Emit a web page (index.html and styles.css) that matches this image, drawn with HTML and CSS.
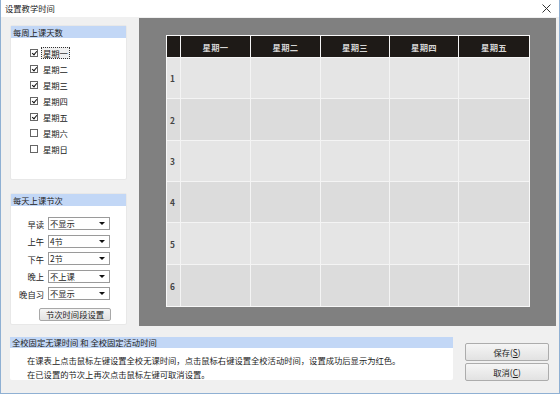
FILE: index.html
```html
<!DOCTYPE html>
<html lang="zh">
<head>
<meta charset="utf-8">
<title>设置教学时间</title>
<link rel="stylesheet" href="styles.css">
</head>
<body>
<div class="window">
  <div class="titlebar">
    <span class="title">设置教学时间</span>
    <svg class="close" width="9" height="9" viewBox="0 0 9 9"><path d="M0.5 0.5 L8.5 8.5 M8.5 0.5 L0.5 8.5" stroke="#333" stroke-width="1" fill="none"/></svg>
  </div>
  <div class="main">
    <div class="leftcol">
      <section class="panel days">
        <div class="panel-head">每周上课天数</div>
        <ul class="checks">
          <li><span class="cb on"></span><span class="lbl focus">星期一</span></li>
          <li><span class="cb on"></span><span class="lbl">星期二</span></li>
          <li><span class="cb on"></span><span class="lbl">星期三</span></li>
          <li><span class="cb on"></span><span class="lbl">星期四</span></li>
          <li><span class="cb on"></span><span class="lbl">星期五</span></li>
          <li><span class="cb"></span><span class="lbl">星期六</span></li>
          <li><span class="cb"></span><span class="lbl">星期日</span></li>
        </ul>
      </section>
      <section class="panel periods">
        <div class="panel-head">每天上课节次</div>
        <div class="rows">
          <div class="row"><span class="rl">早读</span><span class="sel"><span class="sv">不显示</span><span class="arr"></span></span></div>
          <div class="row"><span class="rl">上午</span><span class="sel"><span class="sv">4节</span><span class="arr"></span></span></div>
          <div class="row"><span class="rl">下午</span><span class="sel"><span class="sv">2节</span><span class="arr"></span></span></div>
          <div class="row"><span class="rl">晚上</span><span class="sel"><span class="sv">不上课</span><span class="arr"></span></span></div>
          <div class="row"><span class="rl">晚自习</span><span class="sel"><span class="sv">不显示</span><span class="arr"></span></span></div>
        </div>
        <button class="btn small">节次时间段设置</button>
      </section>
    </div>
    <div class="canvas">
      <div class="table">
        <div class="th"></div><div class="th">星期一</div><div class="th">星期二</div><div class="th">星期三</div><div class="th">星期四</div><div class="th">星期五</div>
        <div class="td num odd">1</div><div class="td odd"></div><div class="td odd"></div><div class="td odd"></div><div class="td odd"></div><div class="td odd"></div>
        <div class="td num even">2</div><div class="td even"></div><div class="td even"></div><div class="td even"></div><div class="td even"></div><div class="td even"></div>
        <div class="td num odd">3</div><div class="td odd"></div><div class="td odd"></div><div class="td odd"></div><div class="td odd"></div><div class="td odd"></div>
        <div class="td num even r4">4</div><div class="td even r4"></div><div class="td even r4"></div><div class="td even r4"></div><div class="td even r4"></div><div class="td even r4"></div>
        <div class="td num odd">5</div><div class="td odd"></div><div class="td odd"></div><div class="td odd"></div><div class="td odd"></div><div class="td odd"></div>
        <div class="td num even">6</div><div class="td even"></div><div class="td even"></div><div class="td even"></div><div class="td even"></div><div class="td even"></div>
      </div>
    </div>
  </div>
  <div class="bottom">
    <section class="info">
      <div class="panel-head">全校固定无课时间 和 全校固定活动时间</div>
      <p>在课表上点击鼠标左键设置全校无课时间，点击鼠标右键设置全校活动时间，设置成功后显示为红色。</p>
      <p>在已设置的节次上再次点击鼠标左键可取消设置。</p>
    </section>
    <div class="buttons">
      <button class="btn big">保存(<u>S</u>)</button>
      <button class="btn big">取消(<u>C</u>)</button>
    </div>
  </div>
</div>
</body>
</html>
```

FILE: styles.css
```css
* { box-sizing: border-box; }
html, body { margin: 0; padding: 0; }
body {
  width: 560px;
  height: 394px;
  background: #ffffff;
  font-family: "Noto Sans CJK SC", "Noto Sans", sans-serif;
  font-size: 8.3px;
  color: #222;
  overflow: hidden;
}
.window {
  width: 560px;
  height: 394px;
  background: #f0f0f0;
  border-left: 1px solid #8fb0d3;
  border-right: 1px solid #8fb0d3;
  border-bottom: 1px solid #8fb0d3;
  display: flex;
  flex-direction: column;
}
.titlebar {
  height: 17px;
  background: #fff;
  display: flex;
  align-items: center;
  justify-content: space-between;
  padding: 0 8px 0 4px;
}
.title { font-size: 8.3px; line-height: 17px; color: #222; }
.close { display: block; margin-top: -1px; }

.main {
  display: flex;
  gap: 12px;
  padding: 1px 2px 0 9px;
  height: 309px;
}
.leftcol {
  width: 117px;
  padding-top: 7px;
  display: flex;
  flex-direction: column;
  gap: 13px;
}
.panel {
  background: #fff;
  border: 1px solid #e8e8e8;
  border-radius: 2px;
}
.panel-head {
  background: #c2d7f6;
  height: 12px;
  line-height: 12px;
  padding-left: 2px;
  color: #222;
  white-space: nowrap;
}
.days { height: 155px; }
.checks {
  list-style: none;
  margin: 0;
  padding: 7px 0 0 19px;
}
.checks li {
  height: 16px;
  display: flex;
  align-items: center;
}
.cb {
  width: 8px;
  height: 8px;
  border: 1px solid #666;
  background: #fff;
  margin-right: 3px;
  position: relative;
}
.cb.on::after {
  content: "";
  position: absolute;
  left: 1.5px;
  top: 0px;
  width: 2px;
  height: 4px;
  border-right: 1.5px solid #111;
  border-bottom: 1.5px solid #111;
  transform: rotate(40deg);
}
.lbl { padding: 0 1px; line-height: 10px; border: 1px solid transparent; white-space: nowrap; }
.lbl.focus { border: 1px dotted #333; background: #f0f0f0; }

.periods { height: 132px; }
.rows { padding-top: 9px; }
.row {
  height: 17.5px;
  display: flex;
  align-items: center;
}
.rl {
  width: 33px;
  text-align: right;
  margin-right: 4px;
  white-space: nowrap;
}
.sel {
  width: 62px;
  height: 13px;
  border: 1px solid #9a9a9a;
  background: #fff;
  display: flex;
  align-items: center;
  justify-content: space-between;
  padding: 0 2px 0 1px;
}
.sv { line-height: 11px; }
.arr {
  width: 0;
  height: 0;
  border-left: 3px solid transparent;
  border-right: 3px solid transparent;
  border-top: 3px solid #111;
  margin-right: 2px;
}
.btn {
  font-family: inherit;
  font-size: 8.3px;
  color: #222;
  background: linear-gradient(#f5f5f5, #e2e2e2);
  border: 1px solid #a8a8a8;
  border-radius: 2px;
  padding: 0;
  display: flex;
  align-items: center;
  justify-content: center;
  white-space: nowrap;
}
.btn.small {
  width: 72px;
  height: 13px;
  margin: 5px 0 0 28px;
}

.canvas {
  width: 417px;
  height: 308px;
  background: #808080;
  padding: 17px 0 0 27px;
}
.table {
  width: 364px;
  display: grid;
  grid-template-columns: 13px 69px 69px 68px 68px 70px;
  grid-template-rows: 21px 40px 41px 40px 40px 41px 41px;
  gap: 1px;
  background: #f4f4f4;
  border: 1px solid #f8f8f8;
}
.th {
  background: #1e1a17;
  color: #d6d6d6;
  font-weight: bold;
  display: flex;
  align-items: center;
  justify-content: center;
  letter-spacing: 0.3px;
}
.td.odd { background: #e5e5e5; }
.td.even { background: #dcdcdc; }
.td.r4 { box-shadow: 0 1px 0 #f4f4f4; }
.num {
  display: flex;
  align-items: center;
  padding-left: 3px;
  font-weight: bold;
  color: #444;
}

.bottom {
  display: flex;
  padding: 11px 0 0 9px;
  gap: 12px;
}
.info {
  width: 443px;
  height: 43px;
  background: #fff;
  border-radius: 2px;
}
.info .panel-head { height: 11px; line-height: 11px; }
.info p {
  margin: 0;
  padding-left: 17px;
  line-height: 14px;
  white-space: nowrap;
}
.info p:first-of-type { margin-top: 5px; }
.buttons {
  padding-top: 6px;
  display: flex;
  flex-direction: column;
  gap: 2px;
}
.btn.big {
  width: 84px;
  height: 18px;
  border-color: #acacac;
}
.btn u { text-decoration: underline; }
```
